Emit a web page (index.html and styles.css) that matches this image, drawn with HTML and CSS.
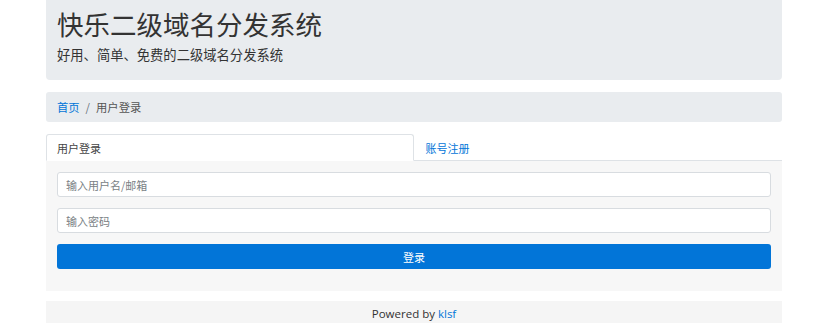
FILE: index.html
```html
<!DOCTYPE html>
<html lang="zh-CN">
<head>
<meta charset="utf-8">
<title>快乐二级域名分发系统</title>
<link rel="stylesheet" href="styles.css">
</head>
<body>
<div class="container">
  <header class="jumbotron">
    <h1 class="title">快乐二级域名分发系统</h1>
    <p class="lead">好用、简单、免费的二级域名分发系统</p>
  </header>
  <nav class="breadcrumb">
    <a class="crumb-link" href="#">首页</a>
    <span class="crumb-sep">/</span>
    <span class="crumb-active">用户登录</span>
  </nav>
  <ul class="tabs">
    <li class="tab tab-active">用户登录</li>
    <li class="tab"><a class="tab-link" href="#">账号注册</a></li>
  </ul>
  <div class="tab-pane">
    <input class="field" type="text" placeholder="输入用户名/邮箱">
    <input class="field" type="password" placeholder="输入密码">
    <button class="btn" type="button">登录</button>
  </div>
  <footer class="footer">Powered by <a class="footer-link" href="#">klsf</a></footer>
</div>
</body>
</html>
```

FILE: styles.css
```css
* { box-sizing: border-box; }
html, body { margin: 0; padding: 0; background: #fff; }
body {
  font-family: "Noto Sans CJK SC", "Noto Sans", sans-serif;
  color: #333;
}
.container {
  width: 736px;
  margin: 0 auto;
  display: flex;
  flex-direction: column;
}
.jumbotron {
  background: #e9ecef;
  border-radius: 0 0 4px 4px;
  height: 80px;
  padding: 6px 11px 0;
}
.title {
  margin: 0;
  font-size: 26.5px;
  font-weight: 400;
  line-height: 36px;
  color: #333;
}
.lead {
  margin: 3px 0 0;
  font-size: 13.3px;
  line-height: 20px;
  color: #333;
}
.breadcrumb {
  margin-top: 12px;
  height: 30px;
  background: #e9ecef;
  border-radius: 3px;
  padding: 0 11px;
  display: flex;
  align-items: center;
  font-size: 11.3px;
  color: #555;
}
.crumb-link { color: #0275d8; text-decoration: none; }
.crumb-sep { margin: 0 6px; color: #6c757d; }
.crumb-active { color: #555; }
.tabs {
  list-style: none;
  margin: 12px 0 0;
  padding: 0;
  display: flex;
  border-bottom: 1px solid #dee2e6;
}
.tab {
  flex: 1;
  height: 27px;
  display: flex;
  align-items: center;
  padding: 0 11px;
  font-size: 11px;
  margin-bottom: -1px;
  border: 1px solid transparent;
  border-radius: 3px 3px 0 0;
}
.tab-active {
  background: #fff;
  border-color: #dee2e6 #dee2e6 #fff;
  color: #444;
  padding-left: 10px;
}
.tab-link { color: #0275d8; text-decoration: none; }
.tab-pane {
  background: #f7f7f7;
  padding: 11px 11px 21px;
  display: flex;
  flex-direction: column;
  gap: 11px;
  height: 130px;
}
.field {
  height: 25px;
  border: 1px solid #d8dce0;
  border-radius: 3px;
  background: #fff;
  padding: 0 8px;
  font-family: inherit;
  font-size: 11px;
  color: #495057;
}
.field::placeholder { color: #7a7f85; }
.btn {
  height: 25px;
  border: 0;
  border-radius: 3px;
  background: #0275d8;
  color: #fff;
  font-family: inherit;
  font-size: 11px;
}
.footer {
  margin-top: 10px;
  background: #f5f5f5;
  height: 30px;
  padding-top: 5px;
  text-align: center;
  font-family: "Open Sans", "Noto Sans", sans-serif;
  font-size: 11.5px;
  color: #333;
}
.footer-link { color: #0275d8; text-decoration: none; }
```
